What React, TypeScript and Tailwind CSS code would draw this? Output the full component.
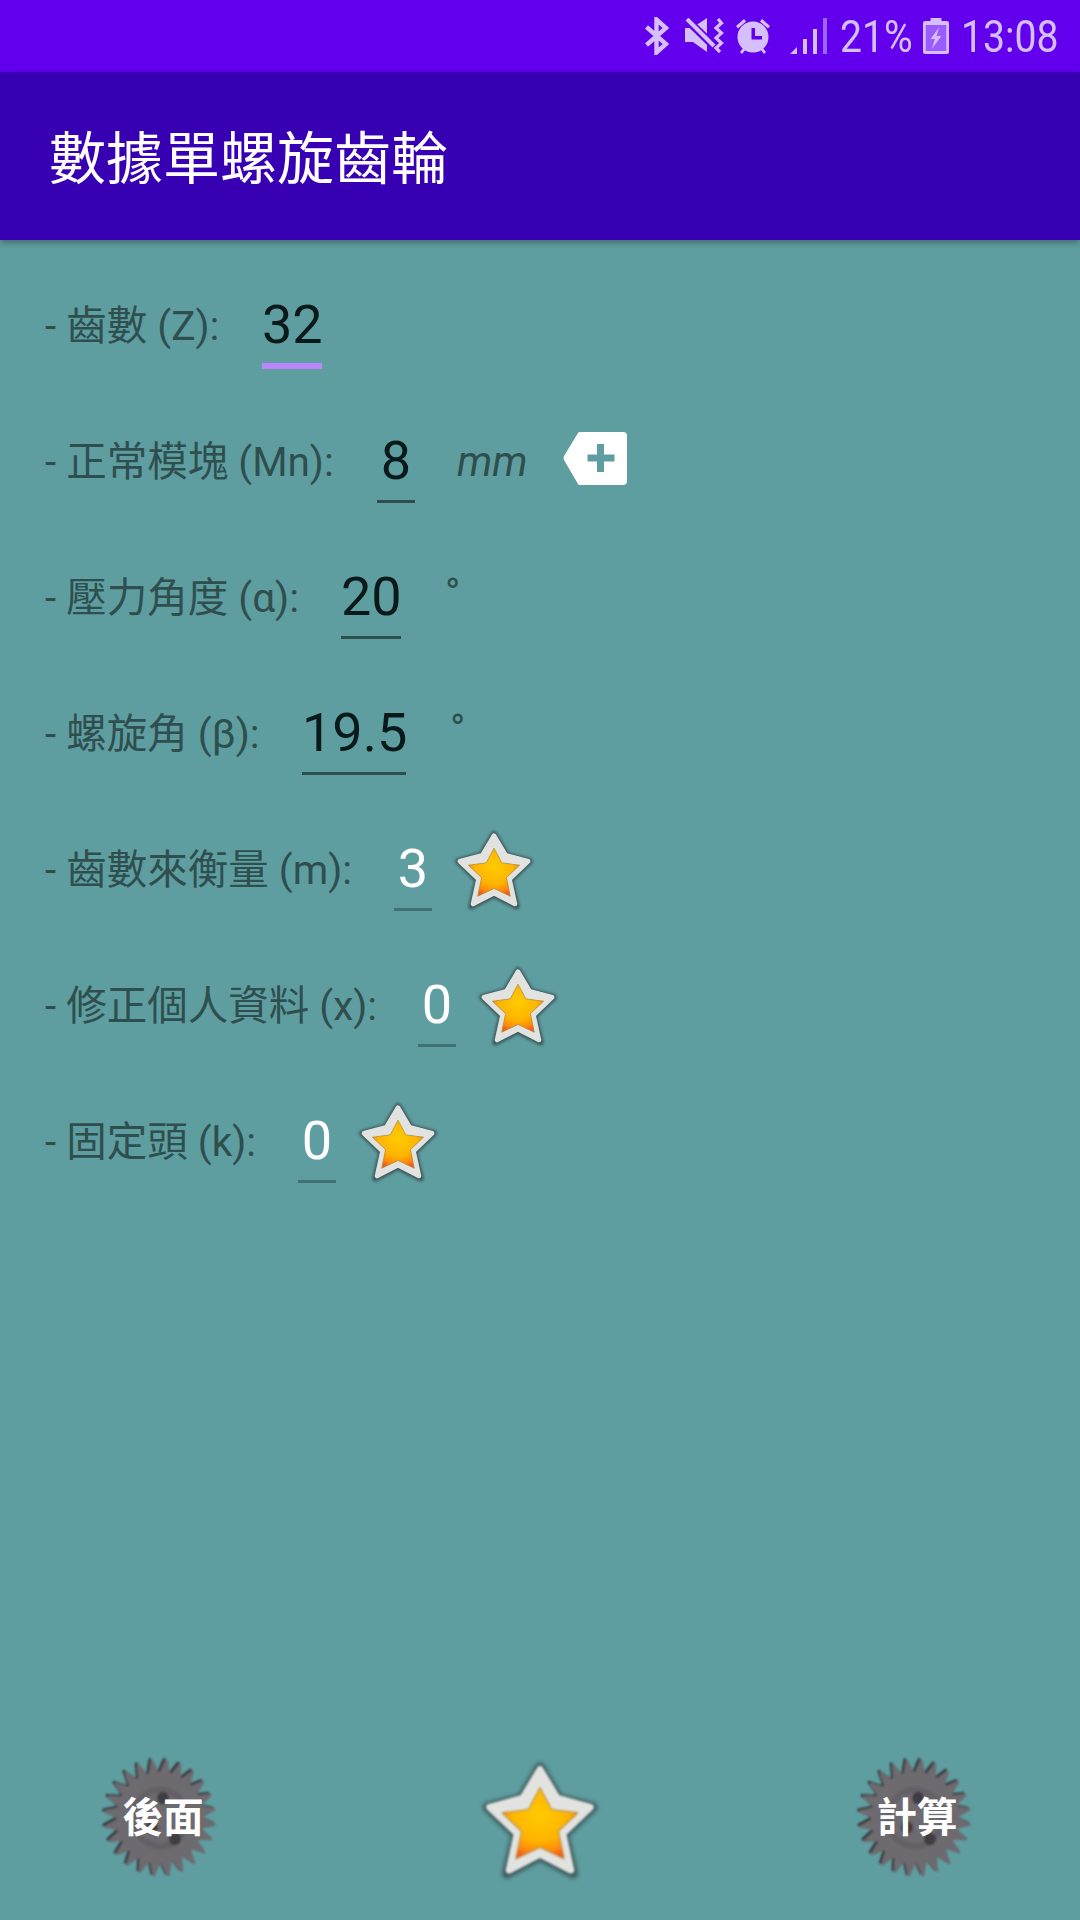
import React from "react";

const Star = ({ size }: { size: number }) => (
  <svg width={size} height={size * 0.96} viewBox="-4 -4 108 104" className="block overflow-visible">
    <defs>
      <radialGradient id="starFill" cx="50%" cy="38%" r="62%">
        <stop offset="0%" stopColor="#ffcb00" />
        <stop offset="60%" stopColor="#ffb400" />
        <stop offset="85%" stopColor="#ff8a0a" />
        <stop offset="100%" stopColor="#f4561c" />
      </radialGradient>
      <filter id="soft" x="-20%" y="-20%" width="140%" height="140%">
        <feGaussianBlur stdDeviation="1.8" />
      </filter>
      <filter id="soft2" x="-20%" y="-20%" width="140%" height="140%">
        <feGaussianBlur stdDeviation="1" />
      </filter>
    </defs>
    <polygon
      points="50,4 66,31 96,39 71,63 79,97 50,82 21,97 29,63 4,39 34,31"
      fill="#2f3d3d"
      stroke="#2f3d3d"
      strokeWidth="8"
      strokeLinejoin="round"
      filter="url(#soft)"
      opacity="0.75"
    />
    <polygon
      points="50,6 65,31 94,39 70,62 77,94 50,80 23,94 30,62 6,39 35,31"
      fill="#e2e2e0"
      stroke="#e2e2e0"
      strokeWidth="6"
      strokeLinejoin="round"
      filter="url(#soft2)"
    />
    <polygon
      points="50,22 60,41 83,44 66,60 71,84 50,74 29,84 34,60 17,44 40,41"
      fill="url(#starFill)"
      stroke="#b08a38"
      strokeWidth="1"
      strokeLinejoin="round"
      filter="url(#soft2)"
    />
  </svg>
);

const gearPath = (() => {
  const teeth = 24;
  const cx = 60;
  const cy = 60;
  const outer = 56;
  const root = 44;
  let d = "";
  for (let i = 0; i < teeth; i++) {
    const a = (i / teeth) * Math.PI * 2;
    const step = (Math.PI * 2) / teeth;
    const pts = [
      [root, a],
      [outer, a + step * 0.36],
      [outer, a + step * 0.5],
      [root, a + step * 0.88],
    ];
    for (const [r, t] of pts) {
      d += `${d ? "L" : "M"}${(cx + r * Math.cos(t)).toFixed(2)} ${(cy + r * Math.sin(t)).toFixed(2)} `;
    }
  }
  return d + "Z";
})();

const GearButton = ({ label, shift }: { label: string; shift: string }) => (
  <div className="relative w-[120px] h-[124px] flex items-center justify-center">
    <svg width="120" height="130" viewBox="0 0 120 124" preserveAspectRatio="none" className="absolute left-0 top-[-3px]">
      <defs>
        <filter id="gearBlur" x="-10%" y="-10%" width="120%" height="120%">
          <feGaussianBlur stdDeviation="0.9" />
        </filter>
      </defs>
      <g filter="url(#gearBlur)" transform="translate(0 2)">
        <path d={gearPath} fill="#343236" transform="translate(-2 -1.5)" />
        <path d={gearPath} fill="#6d6b70" />
        <circle cx="60" cy="60" r="30" fill="#636166" />
        <circle cx="60" cy="60" r="24" fill="#6d6b70" />
        <circle cx="63" cy="41" r="6" fill="#403e42" />
        <circle cx="52" cy="69" r="6" fill="#403e42" />
        <circle cx="75" cy="80" r="6" fill="#403e42" />
      </g>
    </svg>
    <span className={`relative ${shift} text-white font-bold text-[40.5px] leading-none`}>{label}</span>
  </div>
);

type RowProps = {
  label: string;
  labelW: string;
  inputW: string;
  value: string;
  light?: boolean;
  focused?: boolean;
  children?: React.ReactNode;
};

const Row = ({ label, labelW, inputW, value, light, focused, children }: RowProps) => (
  <div className="flex items-baseline h-[112px] pl-[45px]">
    <span className={`${labelW} text-[40.5px] leading-[48px] text-[#2f4f4f] whitespace-nowrap relative top-[-3px]`}>{label}</span>
    <div
      className={`${inputW} text-center text-[54px] leading-[64px] ${
        light ? "text-white" : "text-[#0a1a1a]"
      } ${focused ? "border-b-[6px] border-[#bb86fc] pb-[6px]" : light ? "border-b-[3px] border-[#3f7072] pb-[7px]" : "border-b-[3px] border-[#2f4f4f] pb-[7px]"}`}
    >
      {value}
    </div>
    {children}
  </div>
);

const SB = "#d6bfff";

export default function App() {
  return (
    <div className="w-[1080px] h-[1920px] flex flex-col bg-[#5f9ea0] overflow-hidden" style={{ fontFamily: 'Roboto, "Noto Sans CJK TC", sans-serif' }}>
      <div className="h-[72px] bg-[#6200ee] flex items-center pl-[645px] shrink-0">
        <svg width="24" height="38" viewBox="0 0 24 38" fill="none" stroke={SB} strokeWidth="4.4">
          <path d="M1.5 10 L21 27 L11.5 35.5 V2.5 L21 11 L1.5 28" strokeLinejoin="miter" />
        </svg>
        <svg width="40" height="36" viewBox="0 0 40 36" className="ml-[16px]" fill={SB}>
          <path d="M0 10 H7 L22 0 V34 L8 24 H0 Z" />
          <path d="M1 1 L30 29" stroke="#6200ee" strokeWidth="8" fill="none" />
          <path d="M2 1 L29 28" stroke={SB} strokeWidth="4" fill="none" />
          <path d="M33 1 L36.5 5 L31 10 L36.5 15 L31 20 L36.5 25 L31 30 L35 34" fill="none" stroke={SB} strokeWidth="3.2" />
        </svg>
        <svg width="36" height="36" viewBox="0 0 36 36" className="ml-[10px]" fill={SB}>
          <circle cx="18" cy="19" r="15.5" />
          <path d="M1 8 L9 1 L11 3.5 L3 10.5 Z M35 8 L27 1 L25 3.5 L33 10.5 Z M5 34 L9 29 L11 31 L7 36 Z M31 34 L27 29 L25 31 L29 36 Z" />
          <path d="M16.5 10 H20 V18 H27 V21.5 H16.5 Z" fill="#6200ee" />
        </svg>
        <svg width="37" height="36" viewBox="0 0 37 36" className="ml-[19px]">
          <path d="M0 36 L7 29 V36 Z" fill={SB} />
          <rect x="13" y="21" width="4" height="15" fill={SB} />
          <rect x="23" y="11" width="4" height="25" fill={SB} />
          <rect x="33" y="0" width="4" height="36" fill="#9a66ff" />
        </svg>
        <div className="w-[72px] ml-[13px] text-[45px] leading-none scale-x-[0.87] origin-left whitespace-nowrap text-[#d6bfff]">21%</div>
        <svg width="26" height="36" viewBox="0 0 24 36" preserveAspectRatio="none" className="ml-[11px]">
          <path d="M7 0 H17 V3 H22 Q24 3 24 5 V34 Q24 36 22 36 H2 Q0 36 0 34 V5 Q0 3 2 3 H7 Z" fill={SB} />
          <rect x="2.5" y="7" width="19" height="26" fill="#9a5cff" />
          <path d="M15 9 L7 21 H11 L8 31 L17 18 H12.5 Z" fill={SB} />
        </svg>
        <div className="w-[98px] ml-[12px] text-[45px] leading-none scale-x-[0.87] origin-left whitespace-nowrap text-[#d6bfff]">13:08</div>
      </div>

      <div className="h-[168px] bg-[#3700b3] flex items-center pl-[49px] pt-[7px] text-white text-[57px] leading-none shrink-0 shadow-[0_3px_6px_rgba(0,0,0,0.3)] relative">
        數據單螺旋齒輪
      </div>

      <div className="flex flex-col gap-[24px] pt-[53px]">
        <Row label="- 齒數 (Z):" labelW="w-[217px]" inputW="w-[60px]" value="32" focused />
        <Row label="- 正常模塊 (Mn):" labelW="w-[332px]" inputW="w-[38px]" value="8">
          <span className="ml-[42px] text-[41.5px] italic text-[#2f4f4f] relative top-[-3px]">mm</span>
          <svg width="64" height="53" viewBox="0 0 64 53" className="ml-[35px] self-start relative top-[3px]">
            <path d="M15 1 Q15.5 0 17 0 H60 Q64 0 64 4 V49 Q64 53 60 53 H17 Q15.5 53 15 52 L1 28 Q0 26 1 24 Z" fill="#ffffff" />
            <path d="M25 23.5 H34.5 V13 H41.5 V23.5 H52 V30.5 H41.5 V41 H34.5 V30.5 H25 Z" fill="#5f9ea0" transform="translate(-0.5 -1)" />
          </svg>
        </Row>
        <Row label="- 壓力角度 (α):" labelW="w-[296px]" inputW="w-[60px]" value="20">
          <span className="ml-[44px] text-[41px] text-[#2f4f4f] relative top-[-8px]">°</span>
        </Row>
        <Row label="- 螺旋角 (β):" labelW="w-[257px]" inputW="w-[104px]" value="19.5">
          <span className="ml-[44px] text-[41px] text-[#2f4f4f] relative top-[-8px]">°</span>
        </Row>
        <Row label="- 齒數來衡量 (m):" labelW="w-[349px]" inputW="w-[38px]" value="3" light>
          <div className="ml-[20px] self-center relative top-[-25px]"><Star size={84} /></div>
        </Row>
        <Row label="- 修正個人資料 (x):" labelW="w-[373px]" inputW="w-[38px]" value="0" light>
          <div className="ml-[20px] self-center relative top-[-25px]"><Star size={84} /></div>
        </Row>
        <Row label="- 固定頭 (k):" labelW="w-[253px]" inputW="w-[38px]" value="0" light>
          <div className="ml-[20px] self-center relative top-[-25px]"><Star size={84} /></div>
        </Row>
      </div>

      <div className="mt-auto flex justify-between items-center pl-[100px] pr-[105px] pb-[40px]">
        <GearButton label="後面" shift="left-[3px]" />
        <div className="ml-[5px]"><Star size={124} /></div>
        <GearButton label="計算" shift="left-[2px]" />
      </div>
    </div>
  );
}
